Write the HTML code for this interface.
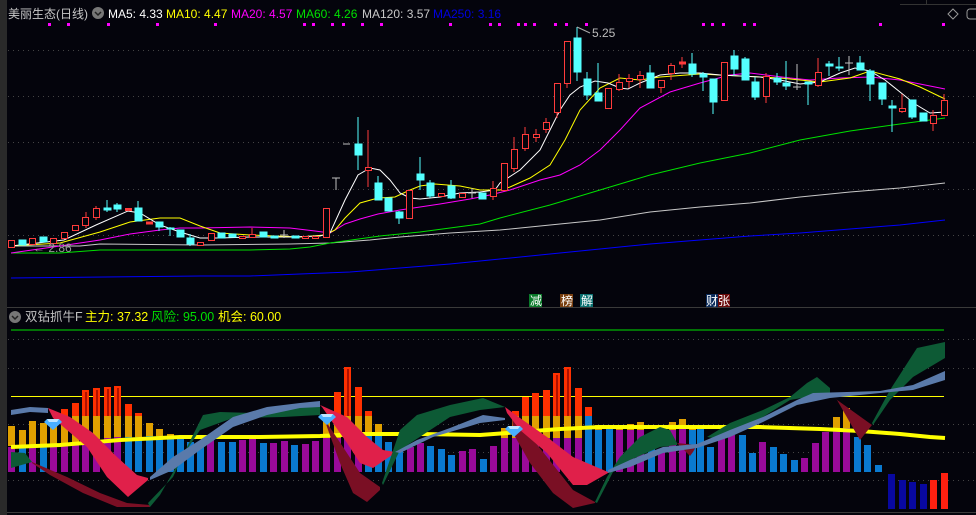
<!DOCTYPE html><html><head><meta charset="utf-8"><style>
html,body{margin:0;padding:0;background:#04040c;width:976px;height:515px;overflow:hidden}
svg{display:block}
text{font-family:"Liberation Sans","Noto Sans CJK SC",sans-serif}
</style></head><body>
<svg width="976" height="515" xmlns="http://www.w3.org/2000/svg">
<rect width="976" height="515" fill="#04040c"/>
<rect x="0" y="0" width="7" height="515" fill="#2a2a2a"/>
<line x1="7" y1="307.5" x2="976" y2="307.5" stroke="#3a3a3a"/>
<line x1="7" y1="512.5" x2="976" y2="512.5" stroke="#3a3a3a"/>
<line x1="900" y1="4.5" x2="976" y2="4.5" stroke="#333"/>
<line x1="926.5" y1="0" x2="926.5" y2="4" stroke="#333"/>
<path d="M953 9 L958 14 L953 19 L948 14Z" fill="none" stroke="#999"/>
<rect x="967" y="9" width="12" height="10" rx="3" fill="none" stroke="#999"/>
<g stroke="#444" stroke-dasharray="1,4">
<line x1="8" y1="50.5" x2="976" y2="50.5"/><line x1="8" y1="96.5" x2="976" y2="96.5"/><line x1="8" y1="142.5" x2="976" y2="142.5"/><line x1="8" y1="189.5" x2="976" y2="189.5"/><line x1="8" y1="235.5" x2="976" y2="235.5"/>
<line x1="8" y1="339.5" x2="976" y2="339.5"/><line x1="8" y1="368.5" x2="976" y2="368.5"/><line x1="8" y1="424.5" x2="976" y2="424.5"/><line x1="8" y1="452.5" x2="976" y2="452.5"/><line x1="8" y1="480.5" x2="976" y2="480.5"/>
</g>
<!-- header -->
<text x="8" y="18" font-size="12" fill="#c8c8c8">美丽生态(日线)</text>
<circle cx="98" cy="13" r="6" fill="#777"/><path d="M95 12 L98 15 L101 12" stroke="#222" fill="none" stroke-width="1.5"/>
<text x="108" y="18" font-size="12" fill="#ffffff">MA5: 4.33</text>
<text x="166" y="18" font-size="12" fill="#ffff00">MA10: 4.47</text>
<text x="231" y="18" font-size="12" fill="#ff00ff">MA20: 4.57</text>
<text x="296" y="18" font-size="12" fill="#00e000">MA60: 4.26</text>
<text x="362" y="18" font-size="12" fill="#c8c8c8">MA120: 3.57</text>
<text x="433" y="18" font-size="12" fill="#0000e0">MA250: 3.16</text>
<g fill="#ff00ff">
<rect x="48" y="23" width="3" height="3"/><rect x="67" y="23" width="3" height="3"/><rect x="107" y="23" width="3" height="3"/><rect x="156" y="23" width="3" height="3"/><rect x="214" y="23" width="3" height="3"/><rect x="303" y="23" width="3" height="3"/><rect x="312" y="23" width="3" height="3"/><rect x="331" y="23" width="3" height="3"/><rect x="342" y="23" width="3" height="3"/><rect x="361" y="23" width="3" height="3"/><rect x="380" y="23" width="3" height="3"/><rect x="449" y="23" width="3" height="3"/><rect x="489" y="23" width="3" height="3"/><rect x="498" y="23" width="3" height="3"/><rect x="517" y="23" width="3" height="3"/><rect x="524" y="23" width="3" height="3"/><rect x="533" y="23" width="3" height="3"/><rect x="554" y="23" width="3" height="3"/><rect x="565" y="23" width="3" height="3"/><rect x="585" y="23" width="3" height="3"/><rect x="702" y="23" width="3" height="3"/><rect x="711" y="23" width="3" height="3"/><rect x="722" y="23" width="3" height="3"/><rect x="743" y="23" width="3" height="3"/><rect x="753" y="23" width="3" height="3"/><rect x="879" y="23" width="3" height="3"/><rect x="942" y="23" width="3" height="3"/>
</g>
<!-- MA lines -->
<g fill="none" stroke-width="1">
<polyline stroke="#0000ff" points="11,278 200,276 250,276 300,274 350,272 400,268 450,264 500,259 550,254 600,249 650,244 700,240 750,236 800,233 850,229 900,225 945,220"/>
<polyline stroke="#c8c8c8" points="11,246 80,246 100,244 200,245 290,244 330,243 370,240 400,237 450,233 500,230 550,225 600,220 650,212 700,207 750,203 800,197 850,192 900,188 945,183"/>
<polyline stroke="#00e000" points="11,253 60,253 100,250 150,250 200,250 250,250 290,249 310,247 330,243 380,236 420,232 480,224 500,218 550,205 600,190 650,175 700,163 750,153 800,140 850,131 900,124 945,118"/>
<polyline stroke="#ff00ff" points="11,253 60,246 100,240 130,234 160,230 180,228 200,228 250,227 290,228 315,231 330,233 345,224 360,219 378,214 400,210 420,207 440,204 470,199 490,195 510,190 540,180 560,175 580,165 600,150 620,130 640,108 670,92 700,83 730,75 750,73 790,78 810,80 840,78 870,77 900,80 920,84 945,89"/>
<polyline stroke="#ffff00" points="11,246 60,243 100,232 130,222 160,218 180,218 200,226 220,233 250,235 300,237 325,235 335,230 345,218 360,203 378,198 395,197 410,190 420,186 435,184 460,186 480,190 500,190 510,187 530,178 550,165 565,140 580,110 600,88 620,78 640,80 660,77 700,74 740,76 780,78 800,80 820,82 850,78 870,71 900,79 920,87 945,99"/>
<polyline stroke="#ffffff" points="11,246 64,240 96,225 128,211 140,213 160,225 180,232 200,238 220,238 250,237 290,237 320,236 330,233 345,200 358,175 370,168 380,170 390,180 400,193 410,198 420,199 440,197 460,193 480,192 495,190 500,183 520,170 540,150 560,110 570,95 580,87 595,81 608,83 620,88 628,89 640,83 660,75 680,73 700,73 720,75 740,76 760,77 780,80 800,84 820,82 840,73 855,68 870,71 885,80 900,92 915,104 930,113 945,112"/>
</g>
<!-- candles -->
<g stroke-width="1">
<g stroke="#ff3b3b" fill="#04040c">
<rect x="8.5" y="240.5" width="6" height="7"/><rect x="29.5" y="238.5" width="6" height="6"/><rect x="50.5" y="238.5" width="6" height="5"/><rect x="61.5" y="232.5" width="6" height="6"/><rect x="72.5" y="225.5" width="6" height="5"/><line x1="86" y1="212" x2="86" y2="228"/><rect x="82.5" y="217.5" width="6" height="8"/><line x1="96" y1="206" x2="96" y2="220"/><rect x="93.5" y="208.5" width="6" height="9"/><rect x="125.5" y="208.5" width="6" height="2" fill="#ff3b3b"/><rect x="146.5" y="222" width="6" height="2" fill="#ff3b3b"/><rect x="197.5" y="242.5" width="6" height="3"/><rect x="208.5" y="233.5" width="6" height="7"/><rect x="239.5" y="236.5" width="6" height="2"/><line x1="252" y1="228" x2="252" y2="237"/><rect x="249.5" y="234.5" width="6" height="3"/><rect x="302.5" y="236.5" width="6" height="2"/><rect x="312.5" y="236.5" width="6" height="2"/><rect x="323.5" y="208.5" width="6" height="29"/>
<line x1="368" y1="130" x2="368" y2="187"/><rect x="365.5" y="167.5" width="6" height="3"/><rect x="406.5" y="190.5" width="6" height="28"/><rect x="438.5" y="193.5" width="6" height="3"/><rect x="459.5" y="193.5" width="6" height="4"/><line x1="493" y1="181" x2="493" y2="200"/><rect x="490.5" y="188.5" width="6" height="8"/><rect x="501.5" y="163.5" width="6" height="27"/><line x1="514" y1="137" x2="514" y2="172"/><rect x="511.5" y="149.5" width="6" height="19"/><line x1="525" y1="127" x2="525" y2="151"/><rect x="522.5" y="134.5" width="6" height="14"/><line x1="536" y1="129" x2="536" y2="142"/><rect x="533.5" y="134.5" width="6" height="3"/><line x1="546" y1="118" x2="546" y2="133"/><rect x="543.5" y="122.5" width="6" height="7"/><line x1="557" y1="83" x2="557" y2="118"/><rect x="554.5" y="83.5" width="6" height="29"/><line x1="567" y1="41" x2="567" y2="88"/><rect x="564.5" y="41.5" width="6" height="42"/><rect x="605.5" y="88.5" width="6" height="20"/><line x1="619" y1="74" x2="619" y2="91"/><rect x="616.5" y="82.5" width="6" height="7"/><line x1="629" y1="74" x2="629" y2="88"/><rect x="626.5" y="78.5" width="6" height="3"/><line x1="640" y1="71" x2="640" y2="88"/><rect x="637.5" y="75.5" width="6" height="4"/><line x1="661" y1="80" x2="661" y2="93"/><rect x="658.5" y="80.5" width="6" height="7"/><line x1="671" y1="63" x2="671" y2="80"/><rect x="668.5" y="65.5" width="6" height="8"/><line x1="682" y1="57" x2="682" y2="68"/><rect x="679.5" y="62" width="6" height="2" fill="#ff3b3b"/><rect x="721.5" y="62.5" width="6" height="38"/><line x1="766" y1="73" x2="766" y2="103"/><rect x="763.5" y="76.5" width="6" height="20"/><line x1="818" y1="58" x2="818" y2="87"/><rect x="815.5" y="72.5" width="6" height="13"/><line x1="902" y1="94" x2="902" y2="113"/><rect x="899.5" y="108.5" width="6" height="3"/><line x1="933" y1="110" x2="933" y2="131"/><rect x="930.5" y="115.5" width="6" height="8"/><line x1="944" y1="94" x2="944" y2="115"/><rect x="941.5" y="100.5" width="6" height="15"/>
</g>
<g stroke="#54ffff" fill="#54ffff">
<rect x="19" y="240" width="7" height="5"/><rect x="40" y="237" width="7" height="5"/><line x1="107" y1="200" x2="107" y2="212"/><rect x="104" y="208" width="7" height="2"/><line x1="117" y1="203" x2="117" y2="212"/><rect x="114" y="205" width="7" height="4"/><line x1="138" y1="201" x2="138" y2="221"/><rect x="135" y="208" width="7" height="13"/><line x1="159" y1="222" x2="159" y2="231"/><rect x="156" y="222" width="7" height="5"/><line x1="170" y1="227" x2="170" y2="236"/><rect x="167" y="228" width="7" height="1"/><rect x="177" y="230" width="7" height="7"/><line x1="190" y1="234" x2="190" y2="246"/><rect x="187" y="238" width="7" height="6"/><rect x="218" y="233" width="7" height="5"/><rect x="229" y="234" width="7" height="3"/><rect x="260" y="232" width="7" height="5"/><rect x="271" y="236" width="7" height="2"/><rect x="292" y="236" width="7" height="2"/>
<line x1="358" y1="117" x2="358" y2="170"/><rect x="355" y="144" width="7" height="11"/><line x1="378" y1="176" x2="378" y2="200"/><rect x="375" y="183" width="7" height="17"/><rect x="385" y="198" width="7" height="13"/><line x1="399" y1="211" x2="399" y2="224"/><rect x="396" y="212" width="7" height="6"/><line x1="420" y1="157" x2="420" y2="190"/><rect x="417" y="174" width="7" height="6"/><line x1="430" y1="180" x2="430" y2="198"/><rect x="427" y="183" width="7" height="13"/><line x1="451" y1="180" x2="451" y2="199"/><rect x="448" y="186" width="7" height="12"/><rect x="479" y="193" width="7" height="6"/><line x1="577" y1="27" x2="577" y2="81"/><rect x="574" y="38" width="7" height="34"/><line x1="587" y1="72" x2="587" y2="100"/><rect x="584" y="79" width="7" height="16"/><line x1="598" y1="63" x2="598" y2="101"/><rect x="595" y="93" width="7" height="8"/><line x1="650" y1="65" x2="650" y2="88"/><rect x="647" y="73" width="7" height="15"/><line x1="692" y1="53" x2="692" y2="77"/><rect x="689" y="64" width="7" height="10"/><line x1="703" y1="72" x2="703" y2="91"/><rect x="700" y="74" width="7" height="3"/><line x1="713" y1="79" x2="713" y2="114"/><rect x="710" y="79" width="7" height="23"/><line x1="734" y1="50" x2="734" y2="76"/><rect x="731" y="56" width="7" height="13"/><line x1="745" y1="57" x2="745" y2="80"/><rect x="742" y="59" width="7" height="21"/><line x1="755" y1="77" x2="755" y2="100"/><rect x="752" y="82" width="7" height="15"/><line x1="777" y1="73" x2="777" y2="85"/><rect x="774" y="78" width="7" height="4"/><line x1="786" y1="61" x2="786" y2="90"/><rect x="783" y="83" width="7" height="3"/><line x1="808" y1="82" x2="808" y2="105"/><rect x="805" y="82" width="7" height="2"/><line x1="829" y1="61" x2="829" y2="76"/><rect x="826" y="64" width="7" height="2"/><line x1="839" y1="57" x2="839" y2="71"/><rect x="836" y="67" width="7" height="1"/><line x1="860" y1="56" x2="860" y2="70"/><rect x="857" y="63" width="7" height="7"/><line x1="870" y1="69" x2="870" y2="101"/><rect x="867" y="71" width="7" height="13"/><line x1="882" y1="83" x2="882" y2="105"/><rect x="879" y="83" width="7" height="16"/><line x1="892" y1="100" x2="892" y2="132"/><rect x="889" y="106" width="7" height="2"/><line x1="912" y1="100" x2="912" y2="119"/><rect x="909" y="100" width="7" height="17"/><rect x="920" y="113" width="7" height="8"/>
</g>
<g stroke="#c0c0c0" fill="none">
<path d="M336 178 V190 M332 178 H340"/><path d="M343 144 H350"/><path d="M284 230 V238 M280 235 H288"/><path d="M472 188 V198 M468 193 H476"/><path d="M797 64 V90 M793 87 H801"/><path d="M849 56 V75 M845 63 H853"/>
</g>
</g>
<path d="M577 27 L590 33" stroke="#aaa" fill="none"/>
<text x="592" y="37" font-size="12" fill="#bbb">5.25</text>
<text x="33" y="252" font-size="12" fill="#999">← 2.86</text>
<!-- signal tags -->
<rect x="529" y="294" width="13" height="13" fill="#0a7a2a"/><text x="530" y="305" font-size="12" fill="#fff">减</text>
<rect x="560" y="294" width="13" height="13" fill="#7a4010"/><text x="561" y="305" font-size="12" fill="#fff">榜</text>
<rect x="580" y="294" width="13" height="13" fill="#0a7070"/><text x="581" y="305" font-size="12" fill="#fff">解</text>
<rect x="706" y="294" width="12" height="13" fill="#0a2a5a"/><text x="706" y="305" font-size="12" fill="#fff">财</text>
<rect x="718" y="294" width="12" height="13" fill="#6a0a0a"/><text x="718" y="305" font-size="12" fill="#fff">张</text>
<!-- lower panel header -->
<circle cx="15" cy="317" r="6" fill="#777"/><path d="M12 316 L15 319 L18 316" stroke="#222" fill="none" stroke-width="1.5"/>
<text x="25" y="321" font-size="12.5" fill="#c0c0c0">双钻抓牛F</text>
<text x="85" y="321" font-size="12.5" fill="#ffff00">主力: 37.32</text>
<text x="151" y="321" font-size="12.5" fill="#00e000">风险: 95.00</text>
<text x="218" y="321" font-size="12.5" fill="#ffff00">机会: 60.00</text>
<line x1="11" y1="330" x2="944" y2="330" stroke="#00e000"/>
<line x1="11" y1="396.5" x2="944" y2="396.5" stroke="#ffff00"/>
<!-- orange/red tops -->
<g>
<g fill="#e0a000">
<rect x="8" y="426" width="7" height="20"/><rect x="19" y="430" width="7" height="16"/><rect x="29" y="421" width="7" height="25"/><rect x="40" y="423" width="7" height="23"/><rect x="50" y="425" width="7" height="21"/><rect x="61" y="416" width="7" height="28"/><rect x="72" y="416" width="7" height="28"/><rect x="82" y="416" width="7" height="24"/><rect x="93" y="416" width="7" height="23"/><rect x="104" y="416" width="7" height="22"/><rect x="114" y="416" width="7" height="21"/><rect x="125" y="416" width="7" height="21"/><rect x="135" y="416" width="7" height="21"/><rect x="146" y="423" width="7" height="13"/><rect x="156" y="429" width="7" height="7"/><rect x="167" y="434" width="7" height="3"/>
<rect x="323" y="417" width="7" height="21"/><rect x="334" y="416" width="7" height="22"/><rect x="344" y="416" width="7" height="22"/><rect x="355" y="416" width="7" height="22"/><rect x="365" y="416" width="7" height="17"/><rect x="375" y="424" width="7" height="9"/>
<rect x="501" y="428" width="7" height="10"/><rect x="512" y="416" width="7" height="22"/><rect x="522" y="416" width="7" height="22"/><rect x="532" y="416" width="7" height="22"/><rect x="543" y="416" width="7" height="22"/><rect x="553" y="416" width="7" height="22"/><rect x="564" y="416" width="7" height="22"/><rect x="575" y="416" width="7" height="22"/><rect x="585" y="416" width="7" height="22"/><rect x="595" y="425" width="7" height="5"/><rect x="616" y="428" width="7" height="5"/><rect x="627" y="424" width="7" height="6"/><rect x="637" y="422" width="7" height="8"/><rect x="669" y="422" width="7" height="8"/><rect x="679" y="419" width="7" height="10"/><rect x="689" y="425" width="7" height="5"/><rect x="833" y="417" width="7" height="12"/><rect x="843" y="408" width="7" height="20"/>
</g>
<g fill="#ff3000">
<rect x="61" y="409" width="7" height="7"/><rect x="72" y="403" width="7" height="13"/><rect x="82" y="390" width="7" height="26"/><rect x="93" y="388" width="7" height="28"/><rect x="104" y="387" width="7" height="29"/><rect x="114" y="386" width="7" height="30"/><rect x="125" y="404" width="7" height="12"/><rect x="135" y="413" width="7" height="3"/>
<rect x="334" y="392" width="7" height="24"/><rect x="344" y="367" width="7" height="49"/><rect x="355" y="387" width="7" height="29"/><rect x="365" y="411" width="7" height="5"/>
<rect x="512" y="411" width="7" height="5"/><rect x="522" y="397" width="7" height="19"/><rect x="532" y="393" width="7" height="23"/><rect x="543" y="390" width="7" height="26"/><rect x="553" y="373" width="7" height="43"/><rect x="564" y="367" width="7" height="49"/><rect x="575" y="388" width="7" height="28"/><rect x="585" y="407" width="7" height="9"/>
</g>
<g fill="#b01000"><rect x="85" y="392" width="2" height="24"/><rect x="96" y="390" width="2" height="26"/><rect x="107" y="389" width="2" height="27"/><rect x="117" y="388" width="2" height="28"/><rect x="347" y="369" width="2" height="47"/><rect x="556" y="375" width="2" height="41"/><rect x="567" y="369" width="2" height="47"/></g>
</g>
<!-- base bars -->
<g fill="#9a0a9a">
<rect x="8" y="447" width="7" height="25"/><rect x="29" y="446" width="7" height="26"/><rect x="50" y="445" width="7" height="27"/><rect x="61" y="444" width="7" height="28"/><rect x="72" y="444" width="7" height="28"/><rect x="82" y="440" width="7" height="32"/><rect x="93" y="439" width="7" height="33"/><rect x="104" y="438" width="7" height="34"/><rect x="114" y="437" width="7" height="35"/><rect x="207" y="440" width="7" height="32"/><rect x="239" y="440" width="7" height="32"/><rect x="249" y="438" width="7" height="34"/><rect x="270" y="443" width="7" height="29"/><rect x="281" y="441" width="7" height="31"/><rect x="302" y="444" width="7" height="28"/><rect x="312" y="441" width="7" height="31"/><rect x="323" y="438" width="7" height="34"/><rect x="334" y="438" width="7" height="34"/><rect x="344" y="438" width="7" height="34"/><rect x="355" y="438" width="7" height="34"/><rect x="407" y="447" width="7" height="25"/><rect x="417" y="443" width="7" height="29"/><rect x="459" y="451" width="7" height="21"/><rect x="469" y="449" width="7" height="23"/><rect x="490" y="446" width="7" height="26"/><rect x="501" y="438" width="7" height="34"/><rect x="512" y="438" width="7" height="34"/><rect x="522" y="438" width="7" height="34"/><rect x="532" y="438" width="7" height="34"/><rect x="543" y="438" width="7" height="34"/><rect x="553" y="438" width="7" height="34"/><rect x="564" y="438" width="7" height="34"/><rect x="575" y="438" width="7" height="34"/><rect x="616" y="430" width="7" height="42"/><rect x="627" y="430" width="7" height="42"/><rect x="637" y="430" width="7" height="42"/><rect x="658" y="450" width="7" height="22"/><rect x="669" y="430" width="7" height="42"/><rect x="679" y="429" width="7" height="43"/><rect x="718" y="438" width="7" height="34"/><rect x="728" y="435" width="7" height="37"/><rect x="759" y="442" width="7" height="30"/><rect x="801" y="458" width="7" height="14"/><rect x="812" y="443" width="7" height="29"/><rect x="822" y="432" width="7" height="40"/><rect x="833" y="429" width="7" height="43"/><rect x="843" y="428" width="7" height="44"/>
</g>
<g fill="#0a7ad0">
<rect x="19" y="447" width="7" height="25"/><rect x="40" y="445" width="7" height="27"/><rect x="125" y="437" width="7" height="35"/><rect x="135" y="437" width="7" height="35"/><rect x="146" y="436" width="7" height="36"/><rect x="156" y="436" width="7" height="36"/><rect x="167" y="436" width="7" height="36"/><rect x="177" y="437" width="7" height="35"/><rect x="187" y="442" width="7" height="30"/><rect x="197" y="443" width="7" height="29"/><rect x="218" y="442" width="7" height="30"/><rect x="229" y="442" width="7" height="30"/><rect x="260" y="443" width="7" height="29"/><rect x="291" y="445" width="7" height="27"/><rect x="365" y="433" width="7" height="39"/><rect x="375" y="433" width="7" height="39"/><rect x="385" y="442" width="7" height="30"/><rect x="396" y="446" width="7" height="26"/><rect x="427" y="446" width="7" height="26"/><rect x="438" y="449" width="7" height="23"/><rect x="448" y="455" width="7" height="17"/><rect x="480" y="459" width="7" height="13"/><rect x="585" y="416" width="7" height="56"/><rect x="595" y="430" width="7" height="42"/><rect x="606" y="428" width="7" height="44"/><rect x="648" y="434" width="7" height="38"/><rect x="689" y="430" width="7" height="42"/><rect x="697" y="428" width="7" height="44"/><rect x="707" y="447" width="7" height="25"/><rect x="739" y="435" width="7" height="37"/><rect x="749" y="453" width="7" height="19"/><rect x="770" y="447" width="7" height="25"/><rect x="780" y="454" width="7" height="18"/><rect x="791" y="460" width="7" height="12"/><rect x="854" y="437" width="7" height="35"/><rect x="864" y="445" width="7" height="27"/><rect x="875" y="465" width="7" height="7"/>
</g>
<!-- yellow thick -->
<polyline points="11,447 60,445 120,440 180,437 260,437 320,436 360,434 420,434 480,435 520,432 560,429 600,427 700,427 760,427 820,429 860,431 900,434 930,437 945,438" fill="none" stroke="#ffff00" stroke-width="4"/>
<!-- ribbons -->
<polygon fill="#0d5a35" points="11,452 25,453 32,462 11,468"/>
<polygon fill="#5a7aaa" points="11,410 30,407 48,408 48,413 30,412 11,415"/>
<polygon fill="#7a0f24" points="32,462 67,477 100,493 127,503 150,505 150,507 117,507 83,493 50,475 32,463"/>
<polygon fill="#e0204a" points="48,408 70,417 93,433 117,457 137,475 148,478 148,480 128,497 107,477 87,447 67,430 53,418"/>
<polygon fill="#0d5a35" points="148,503 173,477 187,447 203,415 220,412 253,413 283,410 320,405 320,415 283,417 233,418 200,430 180,460 160,495 150,507"/>
<polygon fill="#5a7aaa" points="150,477 173,457 200,440 233,417 267,407 300,403 320,401 320,407 300,408 267,415 233,427 200,450 173,470 150,480"/>
<polygon fill="#7a0f24" points="325,420 343,447 360,473 380,487 380,490 367,502 353,493 340,463 327,427"/>
<polygon fill="#e0204a" points="320,405 347,417 367,437 383,450 395,452 395,453 373,468 360,463 347,443 333,423 322,407"/>
<polygon fill="#0d5a35" points="382,483 400,430 417,415 450,405 483,398 505,407 480,410 450,417 400,450 383,485"/>
<polygon fill="#5a7aaa" points="395,452 417,440 450,428 483,415 505,418 505,420 480,423 467,427 433,437 400,453"/>
<polygon fill="#7a0f24" points="512,417 523,427 547,457 573,490 595,502 595,503 573,508 553,493 530,463 513,433"/>
<polygon fill="#e0204a" points="505,407 520,418 547,437 573,457 608,472 608,473 587,485 573,485 547,453 520,430 507,413"/>
<polygon fill="#0d5a35" points="595,502 607,477 620,457 640,437 660,427 670,430 677,443 677,445 660,447 630,460 613,472 597,503"/>
<polygon fill="#7a0f24" points="677,443 697,445 693,452 690,456"/>
<polygon fill="#0d5a35" points="707,437 730,423 763,410 790,397 807,383 817,377 830,388 830,393 790,400 747,427 713,438"/>
<polygon fill="#7a0f24" points="833,397 872,425 860,440 837,400"/>
<polygon fill="#0d5a35" points="872,423 890,390 917,348 945,342 945,358 913,377 890,400 873,425"/>
<polygon fill="#5a7aaa" points="608,470 630,460 663,447 697,444 730,430 763,417 797,400 813,393 847,392 880,391 913,385 945,371 945,380 913,390 880,393 830,398 797,405 763,422 730,437 697,448 663,453 630,467 608,473"/>
<!-- diamonds -->
<g>
<polygon fill="#4ab0ff" points="47,419 59,419 62,422 53,430 44,422"/><polygon fill="#bfe6ff" points="47,419 59,419 57,422 49,422"/>
<polygon fill="#4ab0ff" points="321,414 333,414 336,417 327,425 318,417"/><polygon fill="#bfe6ff" points="321,414 333,414 331,417 323,417"/>
<polygon fill="#4ab0ff" points="508,426 520,426 523,429 514,437 505,429"/><polygon fill="#bfe6ff" points="508,426 520,426 518,429 510,429"/>
</g>
<!-- bottom right bars -->
<rect x="888" y="474" width="7" height="35" fill="#0808a0"/><rect x="899" y="480" width="7" height="29" fill="#0808a0"/><rect x="909" y="482" width="7" height="27" fill="#0808a0"/><rect x="920" y="484" width="7" height="25" fill="#0808a0"/><rect x="930" y="480" width="7" height="29" fill="#ff2010"/><rect x="941" y="473" width="7" height="36" fill="#ff2010"/>
</svg>
</body></html>
